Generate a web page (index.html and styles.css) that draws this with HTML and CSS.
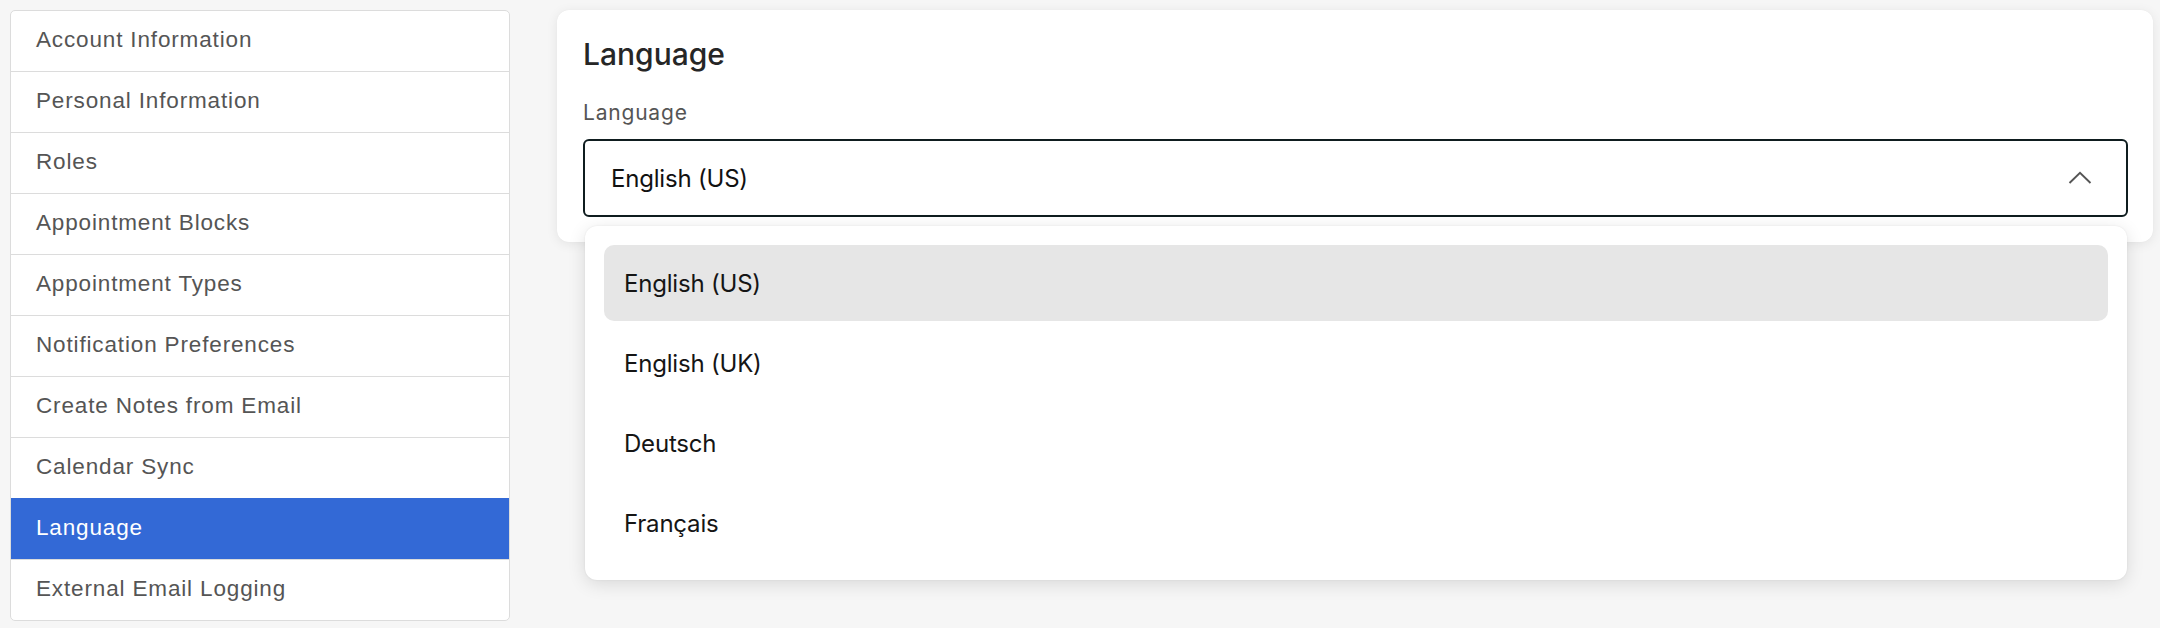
FILE: index.html
```html
<!DOCTYPE html>
<html lang="en">
<head>
<meta charset="utf-8">
<title>Settings – Language</title>
<link rel="stylesheet" href="styles.css">
</head>
<body>
<div class="page">
  <nav class="side-menu">
    <a class="side-item">Account Information</a>
    <a class="side-item">Personal Information</a>
    <a class="side-item">Roles</a>
    <a class="side-item">Appointment Blocks</a>
    <a class="side-item">Appointment Types</a>
    <a class="side-item">Notification Preferences</a>
    <a class="side-item">Create Notes from Email</a>
    <a class="side-item">Calendar Sync</a>
    <a class="side-item active">Language</a>
    <a class="side-item">External Email Logging</a>
  </nav>
  <main class="content">
    <section class="card">
      <h2 class="card-title">Language</h2>
      <label class="field-label">Language</label>
      <div class="select-wrap">
        <div class="select">
          <span class="select-value">English (US)</span>
          <svg class="chevron" width="24" height="14" viewBox="0 0 24 14" aria-hidden="true">
            <polyline points="1.5,12 12,1.8 22.5,12" fill="none" stroke="#555" stroke-width="1.9"/>
          </svg>
        </div>
        <ul class="dropdown">
          <li class="option selected">English (US)</li>
          <li class="option">English (UK)</li>
          <li class="option">Deutsch</li>
          <li class="option">Français</li>
        </ul>
      </div>
    </section>
  </main>
</div>
</body>
</html>
```

FILE: styles.css
```css
* { box-sizing: border-box; }

html, body {
  margin: 0;
  padding: 0;
  background: #f6f6f6;
}

.page {
  display: flex;
  align-items: flex-start;
  gap: 47px;
  padding: 10px 7px 0 10px;
}

/* left settings menu */
.side-menu {
  width: 500px;
  flex: none;
  display: flex;
  flex-direction: column;
  background: #fff;
  border: 1px solid #dcdcdc;
  border-radius: 5px;
  overflow: hidden;
}

.side-item {
  display: flex;
  align-items: center;
  height: 61px;
  padding: 0 0 2px 25px;
  border-top: 1px solid #dcdcdc;
  font-family: "Liberation Sans", Arial, sans-serif;
  font-size: 22.5px;
  letter-spacing: 0.85px;
  color: #555;
  cursor: pointer;
}

.side-item:first-child {
  border-top: none;
  height: 60px;
}

.side-item.active {
  background: #3369d6;
  color: #fff;
  border-top-color: #3369d6;
}

/* main panel */
.content {
  flex: 1;
  min-width: 0;
}

.card {
  background: #fff;
  border-radius: 12px;
  box-shadow: 0 2px 12px rgba(0, 0, 0, 0.08), 0 0 1px rgba(0, 0, 0, 0.06);
  padding: 26px 25px 25px 26px;
  font-family: Inter, "Noto Sans", sans-serif;
}

.card-title {
  margin: 0;
  font-size: 30px;
  font-weight: 500;
  line-height: 36px;
  color: #262626;
}

.field-label {
  display: block;
  margin-top: 29px;
  font-size: 21px;
  line-height: 24px;
  letter-spacing: 0.8px;
  color: #555;
}

.select-wrap {
  position: relative;
  margin-top: 14px;
}

.select {
  display: flex;
  align-items: center;
  justify-content: space-between;
  height: 78px;
  padding: 0 34px 0 26px;
  border: 2px solid #0f1d1f;
  border-radius: 6px;
  background: #fff;
}

.select-value {
  font-size: 24px;
  color: #111;
  letter-spacing: -0.2px;
}

.chevron { display: block; }

/* open list below the select */
.dropdown {
  position: absolute;
  top: 87px;
  left: 2px;
  right: 1px;
  margin: 0;
  padding: 19px;
  list-style: none;
  background: #fff;
  border-radius: 12px;
  box-shadow: 0 4px 18px rgba(0, 0, 0, 0.12), 0 0 2px rgba(0, 0, 0, 0.08);
  display: flex;
  flex-direction: column;
  gap: 4px;
}

.option {
  height: 76px;
  display: flex;
  align-items: center;
  padding-left: 20px;
  border-radius: 10px;
  font-size: 24px;
  letter-spacing: -0.2px;
  color: #151515;
}

.option.selected {
  background: #e6e6e6;
}
```
